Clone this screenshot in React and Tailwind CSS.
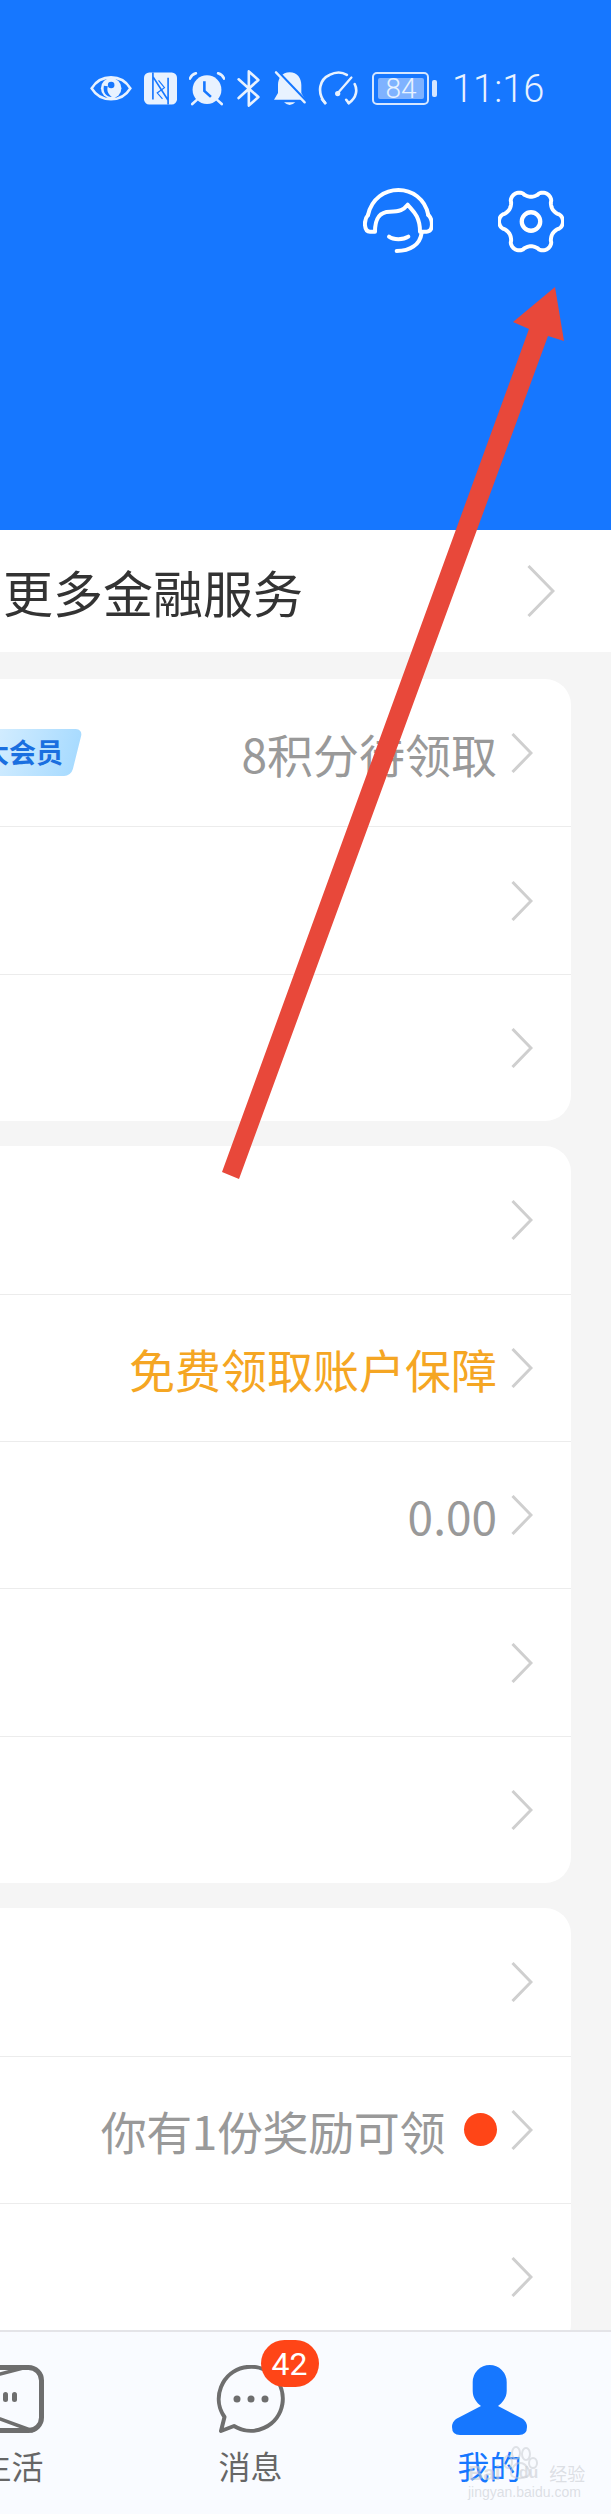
import React from "react";

const ICON = "#e8f2ff";
const BLUE = "#1677ff";

function Chevron({ big }) {
  return big ? (
    <svg width="28" height="52" viewBox="0 0 28 52" fill="none" className="shrink-0">
      <path d="M1.5 1 L26 26 L1.5 51" stroke="#cfcfcf" strokeWidth="3" />
    </svg>
  ) : (
    <svg width="22" height="40" viewBox="0 0 22 40" fill="none" className="shrink-0">
      <path d="M1.5 1 L20 20 L1.5 39" stroke="#cfcfcf" strokeWidth="3" />
    </svg>
  );
}

function Eye() {
  return (
    <svg width="42" height="29" viewBox="58 72 127 73" className="shrink-0">
      <path d="M63 108 C90 64 153 64 180 108 C153 152 90 152 63 108 Z" fill="none" stroke={ICON} strokeWidth="8" />
      <circle cx="122" cy="108" r="31" fill={ICON} />
      <path d="M100 100 C96 122 108 134 124 134 C112 126 108 114 112 102 Z" fill={BLUE} />
      <circle cx="122" cy="98" r="10" fill={BLUE} />
    </svg>
  );
}

function Nfc() {
  return (
    <svg width="33" height="33" viewBox="222 68 100 97" className="shrink-0">
      <rect x="222" y="68" width="100" height="97" rx="16" fill={ICON} />
      <path d="M249 68 V150 M295 165 V84 M250 82 L295 152" fill="none" stroke={BLUE} strokeWidth="5" />
      <path d="M266 92 L284 114 L262 130 L278 148" fill="none" stroke={BLUE} strokeWidth="3.5" />
    </svg>
  );
}

function Alarm() {
  return (
    <svg width="36" height="34" viewBox="357 65 110 102" className="shrink-0">
      <circle cx="412" cy="118" r="44" fill={ICON} />
      <path d="M404 92 V122 L424 140" fill="none" stroke={BLUE} strokeWidth="8" />
      <path d="M360 84 Q365 72 378 68 M464 84 Q459 72 446 68 M367 162 L380 150 M457 162 L444 150" fill="none" stroke={ICON} strokeWidth="8" strokeLinecap="round" />
    </svg>
  );
}

function Bluetooth() {
  return (
    <svg width="23" height="37" viewBox="500 60 70 112" className="shrink-0">
      <path d="M505 88 L565 142 L536 168 V64 L565 90 L505 145" fill="none" stroke={ICON} strokeWidth="8" strokeLinejoin="round" strokeLinecap="round" />
    </svg>
  );
}

function Bell() {
  return (
    <svg width="32" height="35" viewBox="610 66 96 105" className="shrink-0">
      <path d="M657 70 C680 70 692 88 692 108 V132 L704 152 H610 L622 132 V108 C622 88 634 70 657 70 Z" fill={ICON} />
      <path d="M640 160 Q657 176 674 160 Z" fill={ICON} />
      <path d="M614 62 L704 156" stroke={BLUE} strokeWidth="11" />
      <path d="M616 70 L702 160" stroke={ICON} strokeWidth="7" strokeLinecap="round" />
    </svg>
  );
}

function Speed() {
  return (
    <svg width="40" height="36" viewBox="740 60 122 110" className="shrink-0">
      <path d="M762 158 C735 125 745 85 775 72 C795 62 815 64 828 72" fill="none" stroke={ICON} strokeWidth="8" strokeLinecap="round" />
      <path d="M834 158 C860 140 860 115 852 100" fill="none" stroke={ICON} strokeWidth="8" strokeLinecap="round" />
      <path d="M762 158 L752 146 M834 158 L826 148" stroke={ICON} strokeWidth="8" strokeLinecap="round" />
      <path d="M800 128 L842 80" stroke={ICON} strokeWidth="7" strokeLinecap="round" />
      <circle cx="800" cy="129" r="8" fill={ICON} />
    </svg>
  );
}

function Battery() {
  return (
    <div className="flex items-center gap-[3px] shrink-0">
      <div className="w-[57px] h-[33px] rounded-[5px] border-[2.5px] border-[#d5e6ff] p-[4px]">
        <div className="w-[46px] h-full rounded-[2px] bg-[#7fb2ff] flex items-center justify-center text-[28px] leading-none text-[#e8f2ff] font-['Roboto',sans-serif] font-light">
          84
        </div>
      </div>
      <div className="w-[5px] h-[17px] rounded-[2px] bg-[#d5e6ff]" />
    </div>
  );
}

function Headset() {
  return (
    <svg width="70" height="65" viewBox="69 414 210 195" fill="none" stroke="#fff" strokeWidth="12" strokeLinecap="round" strokeLinejoin="round" className="shrink-0">
      <path d="M84 495 C95 445 135 420 175 420 C215 420 255 445 265 495" />
      <path d="M84 495 C70 510 72 545 90 545 H105 C105 510 115 485 150 485 C180 485 190 480 203 464 C215 480 240 495 240 545 H260 C280 545 280 510 265 495" />
      <path d="M245 548 C240 585 210 603 170 603" />
      <path d="M147 560 C160 570 190 570 205 560" />
    </svg>
  );
}

function Gear() {
  const pts = [];
  for (let i = 0; i < 180; i++) {
    const t = (i / 180) * Math.PI * 2;
    const c = Math.cos(6 * t);
    const r = 86 + 11 * Math.sign(c) * Math.pow(Math.abs(c), 0.7);
    pts.push(`${(573 + r * Math.cos(t)).toFixed(1)} ${(513 + r * Math.sin(t)).toFixed(1)}`);
  }
  return (
    <svg width="66" height="67" viewBox="473 413 200 200" fill="none" stroke="#fff" strokeWidth="12" strokeLinejoin="round" className="shrink-0">
      <path d={`M${pts.join(" L")} Z`} />
      <circle cx="573" cy="513" r="28" strokeWidth="13" />
    </svg>
  );
}

function Row({ children, left, first }) {
  return (
    <div className={`h-[147.4px] flex items-center justify-between pr-[38px] ${first ? "" : "border-t border-[#ececec]"}`}>
      <div>{left}</div>
      <div className="flex items-center gap-[14px]">
        {children}
        <Chevron />
      </div>
    </div>
  );
}

function Value({ children, className = "text-[#999999]" }) {
  return <span className={`text-[46px] leading-none ${className}`}>{children}</span>;
}

function Card({ children }) {
  return <section className="-ml-[40px] w-[611px] shrink-0 rounded-[26px] bg-white overflow-hidden">{children}</section>;
}

function LifeIcon() {
  return (
    <svg width="64" height="68" viewBox="0 0 64 68" fill="none" stroke="#6e6e6e" strokeWidth="5" className="shrink-0">
      <rect x="-14" y="2.5" width="75.5" height="63" rx="13" />
      <path d="M47 2 L20 9 L0 14 M53 66 L20 54 L0 46" strokeWidth="3.5" />
      <rect x="23" y="27" width="5" height="10" rx="2.5" fill="#6e6e6e" stroke="none" />
      <rect x="32" y="27" width="5" height="10" rx="2.5" fill="#6e6e6e" stroke="none" />
    </svg>
  );
}

function ChatIcon() {
  return (
    <svg width="72" height="70" viewBox="0 0 72 70" fill="none" className="shrink-0">
      <path d="M9.5 52 L6 66 L19 61 A32 32 0 1 0 9.5 52 Z" stroke="#6e6e6e" strokeWidth="4" strokeLinejoin="round" />
      <circle cx="22" cy="34" r="3.5" fill="#6e6e6e" />
      <circle cx="36" cy="34" r="3.5" fill="#6e6e6e" />
      <circle cx="50" cy="34" r="3.5" fill="#6e6e6e" />
    </svg>
  );
}

function MeIcon() {
  return (
    <svg width="75" height="70" viewBox="0 0 75 70" className="shrink-0">
      <path
        d="M20.7 17 A17 17 0 0 1 54.7 17 V26 C54.7 33 50 38 46 41 L71 54 Q75 57 75 62 Q75 70 67 70 H8 Q0 70 0 62 Q0 57 4 54 L29 41 C25 38 20.7 33 20.7 26 Z"
        fill={BLUE}
      />
    </svg>
  );
}

function Tab({ icon, label, active, badge }) {
  return (
    <div className="w-[239px] shrink-0 flex flex-col items-center pt-[33px]">
      <div className="relative h-[70px] flex items-start">
        {icon}
        {badge && (
          <span className="absolute left-[46px] -top-[25px] w-[58px] h-[47px] rounded-full bg-[#ff4517] text-white flex items-center justify-center text-[32px] leading-none font-['Roboto',sans-serif]">
            {badge}
          </span>
        )}
      </div>
      <span className={`mt-[11px] text-[32px] leading-[38px] ${active ? "text-[#1677ff]" : "text-[#666666]"}`}>{label}</span>
    </div>
  );
}

export default function App() {
  return (
    <div className="relative w-[611px] h-[2514px] overflow-hidden bg-[#f5f5f5] flex flex-col font-['Noto_Sans_CJK_SC','Noto_Sans',sans-serif]">
      <header className="h-[530px] shrink-0 bg-[#1677ff]">
        <div className="h-[37px] mt-[70px] pl-[90px] flex items-center">
          <Eye />
          <div className="w-[12px]" />
          <Nfc />
          <div className="w-[12px]" />
          <Alarm />
          <div className="w-[12px]" />
          <Bluetooth />
          <div className="w-[14px]" />
          <Bell />
          <div className="w-[12px]" />
          <Speed />
          <div className="w-[14px]" />
          <Battery />
          <span className="ml-[15px] text-[38px] leading-none font-light text-[#e8f2ff] font-['Roboto',sans-serif]">11:16</span>
        </div>
        <div className="mt-[81px] pr-[47px] flex justify-end gap-[65px]">
          <Headset />
          <Gear />
        </div>
      </header>

      <div className="h-[122px] shrink-0 bg-white flex items-center justify-between pl-[3px] pr-[56px]">
        <span className="text-[50px] leading-none text-[#333333]">更多金融服务</span>
        <Chevron big />
      </div>

      <main className="flex-1 min-h-0 overflow-hidden flex flex-col gap-[25px] pt-[27px]">
        <Card>
          <Row
            first
            left={
              <div className="relative ml-[40px] w-[74px] h-[47px]">
                <div className="absolute -left-[20px] top-0 w-[97px] h-[47px] -skew-x-[14deg] rounded-[7px] bg-gradient-to-r from-[#d8efff] to-[#a8dbff]" />
                <span className="absolute -left-[18px] top-[8px] whitespace-nowrap text-[27px] leading-[30px] font-bold text-[#1a6fe0]">大会员</span>
              </div>
            }
          >
            <Value>8积分待领取</Value>
          </Row>
          <Row />
          <Row />
        </Card>
        <Card>
          <Row first />
          <Row>
            <Value className="text-[#f5a623]">免费领取账户保障</Value>
          </Row>
          <Row>
            <Value>0.00</Value>
          </Row>
          <Row />
          <Row />
        </Card>
        <Card>
          <Row first />
          <Row>
            <Value className="text-[#999999] tracking-[-0.4px]">你有1份奖励可领</Value>
            <span className="ml-[5px] w-[33px] h-[33px] rounded-full bg-[#ff4517]" />
          </Row>
          <Row />
        </Card>
      </main>

      <nav className="h-[184px] shrink-0 border-t-2 border-[#e4e4e8] bg-[#f9fbff] -ml-[108px] pr-[108px] w-[719px] flex">
        <Tab icon={<LifeIcon />} label="生活" />
        <Tab icon={<ChatIcon />} label="消息" badge="42" />
        <Tab icon={<MeIcon />} label="我的" active />
      </nav>

      <svg className="absolute inset-0 pointer-events-none" width="611" height="2514" viewBox="0 0 611 2514">
        <path d="M555 287 L513 322 L529 329 L222 1172 L239 1179 L548 336 L564 341 Z" fill="#e8483a" />
      </svg>

      <svg className="absolute left-[500px] top-[2446px] pointer-events-none" width="40" height="34" viewBox="0 0 40 34" fill="none" stroke="#c9ccd2" strokeOpacity="0.55" strokeWidth="2">
        <ellipse cx="8" cy="16" rx="4" ry="6" />
        <ellipse cx="16" cy="7" rx="4" ry="6" />
        <ellipse cx="26" cy="8" rx="4" ry="6" />
        <ellipse cx="33" cy="17" rx="4" ry="5" />
        <path d="M20 17 C26 17 32 26 28 30 C24 33 16 33 12 30 C9 26 14 17 20 17 Z" />
      </svg>
      <div className="absolute left-[468px] top-[2462px] w-[110px] pointer-events-none text-[#c9ccd2]/60">
        <div className="flex items-center whitespace-nowrap font-['Liberation_Sans',sans-serif] h-[22px]">
          <span className="text-[21px] leading-[22px] font-bold">Bai</span>
          <span className="ml-[18px] text-[16px] leading-[22px] font-bold">du</span>
          <span className="ml-[11px] text-[18px] leading-[22px] font-['Noto_Sans_CJK_SC',sans-serif]">经验</span>
        </div>
        <div className="mt-[1px] text-[14px] leading-[14px] whitespace-nowrap font-['Liberation_Sans',sans-serif]">jingyan.baidu.com</div>
      </div>
    </div>
  );
}
